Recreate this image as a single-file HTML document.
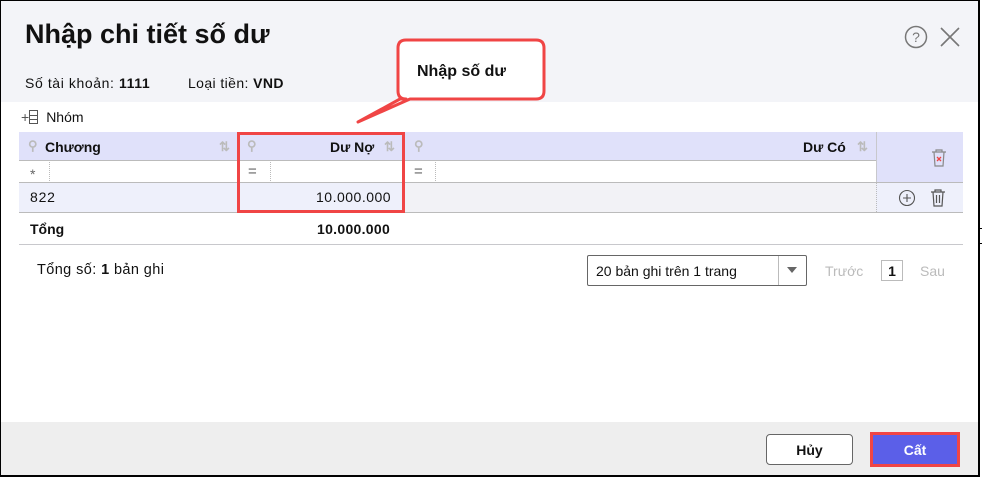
<!DOCTYPE html>
<html><head><meta charset="utf-8"><style>
*{box-sizing:border-box;margin:0;padding:0}
body{width:982px;height:478px;font-family:"Liberation Sans",sans-serif;font-size:14px;color:#111;background:#fff;position:relative;overflow:hidden}
.frame{position:absolute;left:0;top:0;width:980px;height:477px;border:1px solid #000;border-right:2px solid #000;border-bottom:2px solid #000}
.hdr{position:absolute;left:1px;top:1px;width:977px;height:101px;background:#f3f4f8}
.ab{position:absolute}
.th{position:absolute;top:132px;height:28px;background:#e0e1fa;font-weight:bold;font-size:13px}
.line{position:absolute;height:1px;background:#c8c8cc}
.foot{position:absolute;left:1px;top:422px;width:977px;height:53px;background:#eeeeee}
.btn{position:absolute;border-radius:4px;font-weight:bold;font-size:14px;text-align:center}
.gr{color:#bbb}
</style></head><body>
<div class="hdr"></div>
<div class="ab" style="left:25px;top:19px;font-size:27px;font-weight:bold">Nhập chi tiết số dư</div>
<svg class="ab" style="left:903px;top:24px" width="26" height="26"><circle cx="13" cy="13" r="10.5" fill="none" stroke="#777" stroke-width="1.5"/><text x="13" y="18" text-anchor="middle" font-size="14" fill="#777" font-family="Liberation Sans">?</text></svg>
<svg class="ab" style="left:938px;top:25px" width="24" height="24"><path d="M3 3L21 21M21 3L3 21" stroke="#777" stroke-width="1.6"/></svg>
<div class="ab" style="left:25px;top:75px;font-size:14px;letter-spacing:0.6px">Số tài khoản: <b>1111</b></div>
<div class="ab" style="left:188px;top:75px;font-size:14px;letter-spacing:0.4px">Loại tiền: <b>VND</b></div>
<svg class="ab" style="left:340px;top:36px" width="210" height="100"><path d="M66 4H196Q204 4 204 12V55Q204 63 196 63H70L18 86L60 63H66Q58 63 58 55V12Q58 4 66 4Z" fill="#fff" stroke="#f04545" stroke-width="3" stroke-linejoin="round"/></svg>
<div class="ab" style="left:417px;top:63px;font-size:16px;font-weight:bold">Nhập số dư</div>
<div class="ab" style="left:21px;top:109px;font-size:14px"><span style="color:#555">+</span><span style="display:inline-block;width:9px;height:14px;border:1px solid #555;vertical-align:-2px;margin-right:8px;background:linear-gradient(#555,#555) 0 4px/100% 1px no-repeat,linear-gradient(#555,#555) 0 8px/100% 1px no-repeat"></span>Nhóm</div>
<div class="th" style="left:19px;width:218px"><span class="ab gr" style="left:9px;top:6px">⚲</span><span class="ab" style="left:26px;top:7px;font-size:14px">Chương</span><span class="ab gr" style="left:200px;top:7px">⇅</span></div>
<div class="th" style="left:237px;width:167px"><span class="ab gr" style="left:10px;top:6px">⚲</span><span class="ab" style="left:93px;top:7px;font-size:14px">Dư Nợ</span><span class="ab gr" style="left:147px;top:7px">⇅</span></div>
<div class="th" style="left:404px;width:472px"><span class="ab gr" style="left:10px;top:6px">⚲</span><span class="ab" style="left:399px;top:7px;font-size:14px">Dư Có</span><span class="ab gr" style="left:453px;top:7px">⇅</span></div>
<div class="ab" style="left:876px;top:132px;width:87px;height:50px;background:#e0e1fa;border-left:1px solid #c8c8cc"></div>
<svg class="ab" style="left:930px;top:148px" width="18" height="20"><path d="M2 4H16M6 4V2H12V4M4 4L5 18H13L14 4" fill="none" stroke="#888" stroke-width="1.2"/><path d="M7 9L11 13M11 9L7 13" stroke="#e44" stroke-width="1.3"/></svg>
<div class="line" style="left:19px;top:160px;width:857px;background:#bbb"></div>
<div class="ab" style="left:30px;top:166px;color:#666">*</div>
<div class="ab" style="left:49px;top:162px;height:19px;border-left:1px dotted #bbb"></div>
<div class="ab" style="left:248px;top:163px;color:#666;font-size:15px">=</div>
<div class="ab" style="left:270px;top:162px;height:19px;border-left:1px dotted #bbb"></div>
<div class="ab" style="left:414px;top:163px;color:#666;font-size:15px">=</div>
<div class="ab" style="left:435px;top:162px;height:19px;border-left:1px dotted #bbb"></div>
<div class="line" style="left:19px;top:182px;width:944px;background:#bbb"></div>
<div class="ab" style="left:19px;top:183px;width:385px;height:29px;background:#eef0fb"></div>
<div class="ab" style="left:404px;top:183px;width:472px;height:29px;background:#f2f2f6"></div>
<div class="ab" style="left:876px;top:183px;width:87px;height:29px;background:#eef0fb;border-left:1px dotted #bbb"></div>
<div class="ab" style="left:30px;top:189px;letter-spacing:0.8px">822</div>
<div class="ab" style="left:316px;top:189px;letter-spacing:0.5px">10.000.000</div>
<svg class="ab" style="left:898px;top:189px" width="18" height="18"><circle cx="9" cy="9" r="7.5" fill="none" stroke="#555" stroke-width="1.1"/><path d="M9 5V13M5 9H13" stroke="#555" stroke-width="1.1"/></svg>
<svg class="ab" style="left:929px;top:188px" width="18" height="20"><path d="M2 4H16M6 4V2H12V4M4 4L5 18H13L14 4M7.5 7V15M10.5 7V15" fill="none" stroke="#555" stroke-width="1.2"/></svg>
<div class="line" style="left:19px;top:212px;width:944px;background:#bbb"></div>
<div class="ab" style="left:237px;top:132px;width:168px;height:81px;border:3px solid #f04545"></div>
<div class="ab" style="left:30px;top:221px;font-weight:bold">Tổng</div>
<div class="ab" style="left:317px;top:221px;font-weight:bold;letter-spacing:0.3px">10.000.000</div>
<div class="line" style="left:19px;top:244px;width:944px"></div>
<div class="ab" style="left:37px;top:262px;font-size:14.5px;letter-spacing:0.4px">Tổng số: <b>1</b> bản ghi</div>
<div class="ab" style="left:587px;top:255px;width:220px;height:31px;border:1px solid #666;border-radius:2px;background:#fff"><span class="ab" style="left:8px;top:7px;font-size:14px">20 bản ghi trên 1 trang</span><div class="ab" style="left:190px;top:0;height:29px;border-left:1px solid #bbb;width:28px"></div><span class="ab" style="left:199px;top:11px;width:0;height:0;border-left:5px solid transparent;border-right:5px solid transparent;border-top:6px solid #666"></span></div>
<div class="ab" style="left:825px;top:263px;font-size:14px;color:#bbb">Trước</div>
<div class="ab" style="left:881px;top:260px;width:22px;height:21px;border:1px solid #bbb;text-align:center;font-weight:bold;font-size:14px;padding-top:2px">1</div>
<div class="ab" style="left:920px;top:263px;font-size:14px;color:#bbb">Sau</div>
<div class="foot"></div>
<div class="btn" style="left:766px;top:434px;width:87px;height:31px;border:1px solid #666;background:#fff;padding-top:7px">Hủy</div>
<div class="btn" style="left:870px;top:432px;width:90px;height:35px;border:3px solid #f04545;border-radius:0;background:#5b5fe8;color:#fff;padding-top:7px">Cất</div>
<div class="ab" style="left:979px;top:228px;width:3px;height:16px;border:1px solid #000;border-right:none"></div>
<div class="frame"></div>
</body></html>
